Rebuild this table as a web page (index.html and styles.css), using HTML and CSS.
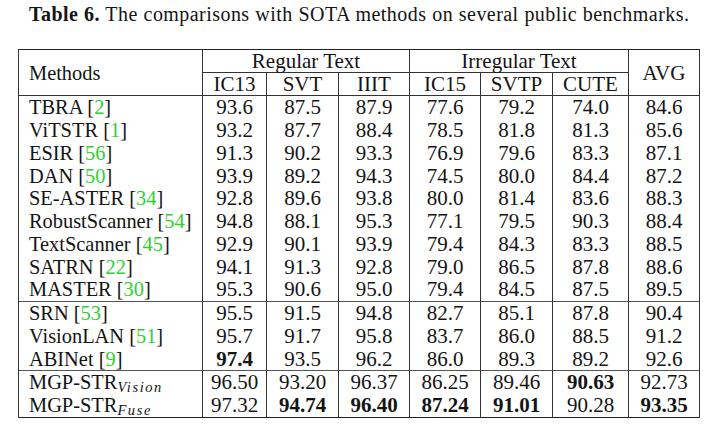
FILE: index.html
```html
<!DOCTYPE html>
<html>
<head>
<meta charset="utf-8">
<link rel="stylesheet" href="styles.css">
</head>
<body>
<div class="caption"><b>Table 6.</b> The comparisons with SOTA methods on several public benchmarks.</div>
<table class="results">
  <colgroup>
    <col class="c-method"><col class="c64"><col class="c72"><col class="c71"><col class="c71"><col class="c72"><col class="c76"><col class="c71">
  </colgroup>
  <thead>
    <tr class="h1">
      <th rowspan="2" class="method">Methods</th>
      <th colspan="3" class="group">Regular Text</th>
      <th colspan="3" class="group">Irregular Text</th>
      <th rowspan="2">AVG</th>
    </tr>
    <tr class="h2">
      <th>IC13</th><th>SVT</th><th>IIIT</th><th>IC15</th><th>SVTP</th><th>CUTE</th>
    </tr>
  </thead>
  <tbody>
    <tr><td class="method">TBRA <span class="cite">[<a>2</a>]</span></td><td>93.6</td><td>87.5</td><td>87.9</td><td>77.6</td><td>79.2</td><td>74.0</td><td>84.6</td></tr>
    <tr><td class="method">ViTSTR <span class="cite">[<a>1</a>]</span></td><td>93.2</td><td>87.7</td><td>88.4</td><td>78.5</td><td>81.8</td><td>81.3</td><td>85.6</td></tr>
    <tr><td class="method">ESIR <span class="cite">[<a>56</a>]</span></td><td>91.3</td><td>90.2</td><td>93.3</td><td>76.9</td><td>79.6</td><td>83.3</td><td>87.1</td></tr>
    <tr><td class="method">DAN <span class="cite">[<a>50</a>]</span></td><td>93.9</td><td>89.2</td><td>94.3</td><td>74.5</td><td>80.0</td><td>84.4</td><td>87.2</td></tr>
    <tr><td class="method">SE-ASTER <span class="cite">[<a>34</a>]</span></td><td>92.8</td><td>89.6</td><td>93.8</td><td>80.0</td><td>81.4</td><td>83.6</td><td>88.3</td></tr>
    <tr><td class="method">RobustScanner <span class="cite">[<a>54</a>]</span></td><td>94.8</td><td>88.1</td><td>95.3</td><td>77.1</td><td>79.5</td><td>90.3</td><td>88.4</td></tr>
    <tr><td class="method">TextScanner <span class="cite">[<a>45</a>]</span></td><td>92.9</td><td>90.1</td><td>93.9</td><td>79.4</td><td>84.3</td><td>83.3</td><td>88.5</td></tr>
    <tr><td class="method">SATRN <span class="cite">[<a>22</a>]</span></td><td>94.1</td><td>91.3</td><td>92.8</td><td>79.0</td><td>86.5</td><td>87.8</td><td>88.6</td></tr>
    <tr class="last"><td class="method">MASTER <span class="cite">[<a>30</a>]</span></td><td>95.3</td><td>90.6</td><td>95.0</td><td>79.4</td><td>84.5</td><td>87.5</td><td>89.5</td></tr>
  </tbody>
  <tbody>
    <tr><td class="method">SRN <span class="cite">[<a>53</a>]</span></td><td>95.5</td><td>91.5</td><td>94.8</td><td>82.7</td><td>85.1</td><td>87.8</td><td>90.4</td></tr>
    <tr><td class="method">VisionLAN <span class="cite">[<a>51</a>]</span></td><td>95.7</td><td>91.7</td><td>95.8</td><td>83.7</td><td>86.0</td><td>88.5</td><td>91.2</td></tr>
    <tr class="last"><td class="method">ABINet <span class="cite">[<a>9</a>]</span></td><td class="best">97.4</td><td>93.5</td><td>96.2</td><td>86.0</td><td>89.3</td><td>89.2</td><td>92.6</td></tr>
  </tbody>
  <tbody>
    <tr><td class="method">MGP-STR<sub>Vision</sub></td><td>96.50</td><td>93.20</td><td>96.37</td><td>86.25</td><td>89.46</td><td class="best">90.63</td><td>92.73</td></tr>
    <tr><td class="method">MGP-STR<sub>Fuse</sub></td><td>97.32</td><td class="best">94.74</td><td class="best">96.40</td><td class="best">87.24</td><td class="best">91.01</td><td>90.28</td><td class="best">93.35</td></tr>
  </tbody>
</table>
</body>
</html>
```

FILE: styles.css
```css
html, body {
  margin: 0;
  padding: 0;
  background: #ffffff;
}

body {
  font-family: "Liberation Serif", serif;
  color: #141414;
}

.caption {
  padding: 3px 0 0 29px;
  height: 49px;
  box-sizing: border-box;
  font-size: 20px;
  letter-spacing: 0.45px;
  word-spacing: 0.3px;
  line-height: 22px;
  white-space: nowrap;
}

.caption b {
  font-weight: 700;
}

.results {
  margin-left: 18px;
  border-collapse: collapse;
  table-layout: fixed;
  width: 682px;
  font-size: 21px;
  border: 1.5px solid #222;
}

.c-method { width: 184px; }
.c64 { width: 64px; }
.c71 { width: 71px; }
.c72 { width: 72px; }
.c76 { width: 76px; }

.results th,
.results td {
  padding: 0;
  text-align: center;
  font-weight: 400;
  border-left: 1px solid #333;
  border-right: 1px solid #333;
  line-height: 20px;
  white-space: nowrap;
}

.results thead th {
  border-bottom: 1px solid #333;
}

.results .h1 th {
  height: 22px;
}

.results .h2 th {
  height: 22px;
}

.results tbody td {
  height: 22.75px;
}

.results tbody + tbody tr:first-child td {
  border-top: 1px solid #555;
}

.results .method {
  text-align: left;
  padding-left: 10px;
  font-size: 20.4px;
}

.cite {
  color: #141414;
}

.cite a {
  color: #2fd12f;
}

.best {
  font-weight: 700 !important;
}

sub {
  font-style: italic;
  font-size: 14.5px;
  vertical-align: -3px;
  line-height: 0;
  letter-spacing: 1.6px;
}
```
